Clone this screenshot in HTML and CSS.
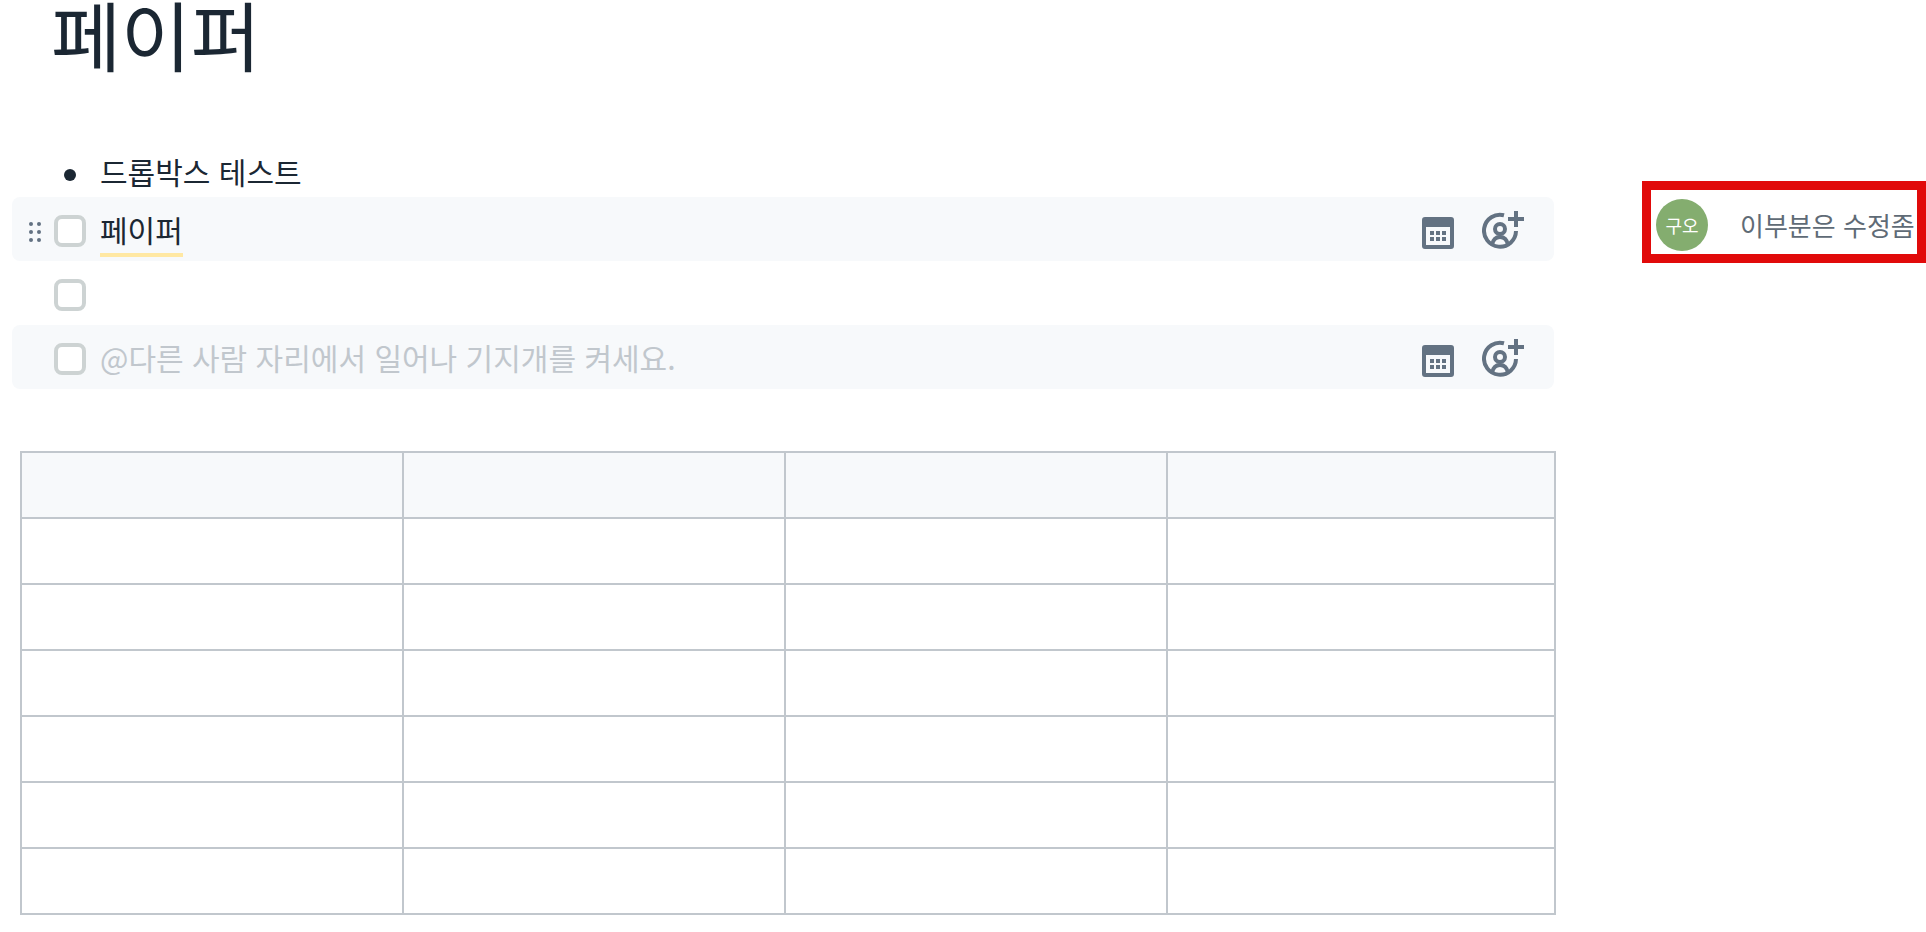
FILE: index.html
```html
<!DOCTYPE html>
<html lang="ko">
<head>
<meta charset="utf-8">
<title>페이퍼</title>
<link rel="stylesheet" href="styles.css">
</head>
<body>
<svg class="sprite" aria-hidden="true">
  <symbol id="calendar" viewBox="0 0 32 32">
    <path fill-rule="evenodd" d="M3 0H29Q32 0 32 3V29Q32 32 29 32H3Q0 32 0 29V3Q0 0 3 0ZM4 10V28H28V10Z"/>
    <path d="M8 14h4v4H8zM14 14h4v4h-4zM20 14h4v4h-4zM8 20h4v4H8zM14 20h4v4h-4zM20 20h4v4h-4z"/>
  </symbol>
  <symbol id="assign" viewBox="0 0 42 38">
    <g fill="none" stroke="currentColor" stroke-width="4">
      <path d="M22 4.200A16 16 0 1 0 34 20"/>
      <circle cx="18" cy="18" r="5"/>
      <path d="M10 34C11 28.500 14 26 18 26S25 28.500 26 34"/>
      <path d="M34 0V16M26 8H42"/>
    </g>
  </symbol>
</svg>
<div class="page">
  <main class="doc">
    <h1 class="title">페이퍼</h1>
    <ul class="bullets">
      <li class="bullet">드롭박스 테스트</li>
    </ul>
    <ul class="tasks">
      <li class="task task-shaded">
        <button class="grip" type="button" aria-label="이동">
          <svg width="12" height="20" viewBox="0 0 12 20"><circle cx="2" cy="2" r="2"/><circle cx="10" cy="2" r="2"/><circle cx="2" cy="10" r="2"/><circle cx="10" cy="10" r="2"/><circle cx="2" cy="18" r="2"/><circle cx="10" cy="18" r="2"/></svg>
        </button>
        <input class="check" type="checkbox" id="task-1">
        <label class="task-text task-label" for="task-1"><span class="commented">페이퍼</span></label>
        <button class="action" type="button" aria-label="마감일"><svg class="icon-calendar"><use href="#calendar"/></svg></button>
        <button class="action" type="button" aria-label="담당자"><svg class="icon-assign"><use href="#assign"/></svg></button>
      </li>
      <li class="task">
        <input class="check" type="checkbox" aria-label="할 일">
      </li>
      <li class="task task-shaded">
        <input class="check" type="checkbox" aria-label="새 할 일">
        <input class="task-text task-input" type="text" aria-label="할 일 내용" placeholder="@다른 사람 자리에서 일어나 기지개를 켜세요.">
        <button class="action" type="button" aria-label="마감일"><svg class="icon-calendar"><use href="#calendar"/></svg></button>
        <button class="action" type="button" aria-label="담당자"><svg class="icon-assign"><use href="#assign"/></svg></button>
      </li>
    </ul>
    <table class="grid">
      <thead>
        <tr><th></th><th></th><th></th><th></th></tr>
      </thead>
      <tbody>
        <tr><td></td><td></td><td></td><td></td></tr>
        <tr><td></td><td></td><td></td><td></td></tr>
        <tr><td></td><td></td><td></td><td></td></tr>
        <tr><td></td><td></td><td></td><td></td></tr>
        <tr><td></td><td></td><td></td><td></td></tr>
        <tr><td></td><td></td><td></td><td></td></tr>
      </tbody>
    </table>
  </main>
  <aside class="comments">
    <div class="comment">
      <span class="avatar">구오</span>
      <p class="comment-text">이부분은 수정좀</p>
    </div>
  </aside>
</div>
</body>
</html>
```

FILE: styles.css
```css
* {
  box-sizing: border-box;
}

body {
  margin: 0;
  background: #fff;
  color: #1b2733;
  font: 30px/48px "Noto Sans CJK KR", sans-serif;
}

.sprite {
  position: absolute;
  width: 0;
  height: 0;
}

.page {
  display: grid;
  grid-template-columns: minmax(0, 1fr) 284px;
  column-gap: 86px;
}

.title {
  margin: 0;
  padding-left: 51px;
  font-size: 76px;
  font-weight: 400;
  line-height: 66px;
}

.bullets,
.tasks {
  margin: 0;
  padding: 0;
  list-style: none;
}

.bullets {
  padding: 83px 0 4px 64px;
}

.bullet {
  display: flex;
  align-items: center;
  gap: 24px;
  line-height: 44px;
}

.bullet::before {
  content: "";
  width: 12px;
  height: 12px;
  margin-top: 8px;
  border-radius: 50%;
  background: #1b2733;
}

.tasks {
  padding: 0 2px 0 12px;
}

.task {
  position: relative;
  display: flex;
  align-items: center;
  height: 64px;
  padding: 0 30px 0 42px;
  border-radius: 8px;
}

.task-shaded {
  background: #f7f9fb;
}

.grip {
  position: absolute;
  left: 17px;
  top: 25px;
  display: flex;
  padding: 0;
  border: 0;
  background: none;
  fill: #637282;
}

.check {
  appearance: none;
  width: 32px;
  height: 32px;
  margin: 4px 14px 0 0;
  border: 4px solid #cdd3d3;
  border-radius: 8px;
  background: #fff;
}

.task-text {
  flex: 1;
  min-width: 0;
}

.task-label {
  padding-top: 4px;
}

.commented {
  display: inline-block;
  border-bottom: 4px solid #ffe8a3;
}

.task-input {
  height: 48px;
  padding: 0;
  border: 0;
  background: none;
  color: #1b2733;
  font: inherit;
}

.task-input::placeholder {
  color: #c1c7cd;
  opacity: 1;
}

.action {
  display: flex;
  align-items: flex-end;
  height: 40px;
  margin: 0 0 0 28px;
  padding: 0;
  border: 0;
  background: none;
  color: #637282;
  fill: #637282;
}

.icon-calendar {
  width: 32px;
  height: 32px;
}

.icon-assign {
  width: 42px;
  height: 38px;
}

.grid {
  width: calc(100% - 20px);
  margin: 62px 0 0 20px;
  border-collapse: collapse;
  table-layout: fixed;
}

.grid th,
.grid td {
  height: 66px;
  padding: 0;
  border: 2px solid #c1c7cd;
}

.grid th {
  background: #f7f9fb;
}

.grid th:not(:last-child) {
  width: 24.9%;
}

.comments {
  padding-top: 181px;
}

.comment {
  display: flex;
  align-items: center;
  gap: 32px;
  height: 82px;
  padding: 6px 0 0 5px;
  border: 9px solid #e10a0a;
  overflow: hidden;
}

.avatar {
  flex: none;
  width: 52px;
  height: 52px;
  border-radius: 50%;
  background: #84ad6f;
  color: #fff;
  font-size: 18px;
  line-height: 52px;
  text-align: center;
}

.comment-text {
  margin: 0;
  color: #5f6b76;
  font-size: 26px;
  line-height: 40px;
  white-space: nowrap;
}
```
